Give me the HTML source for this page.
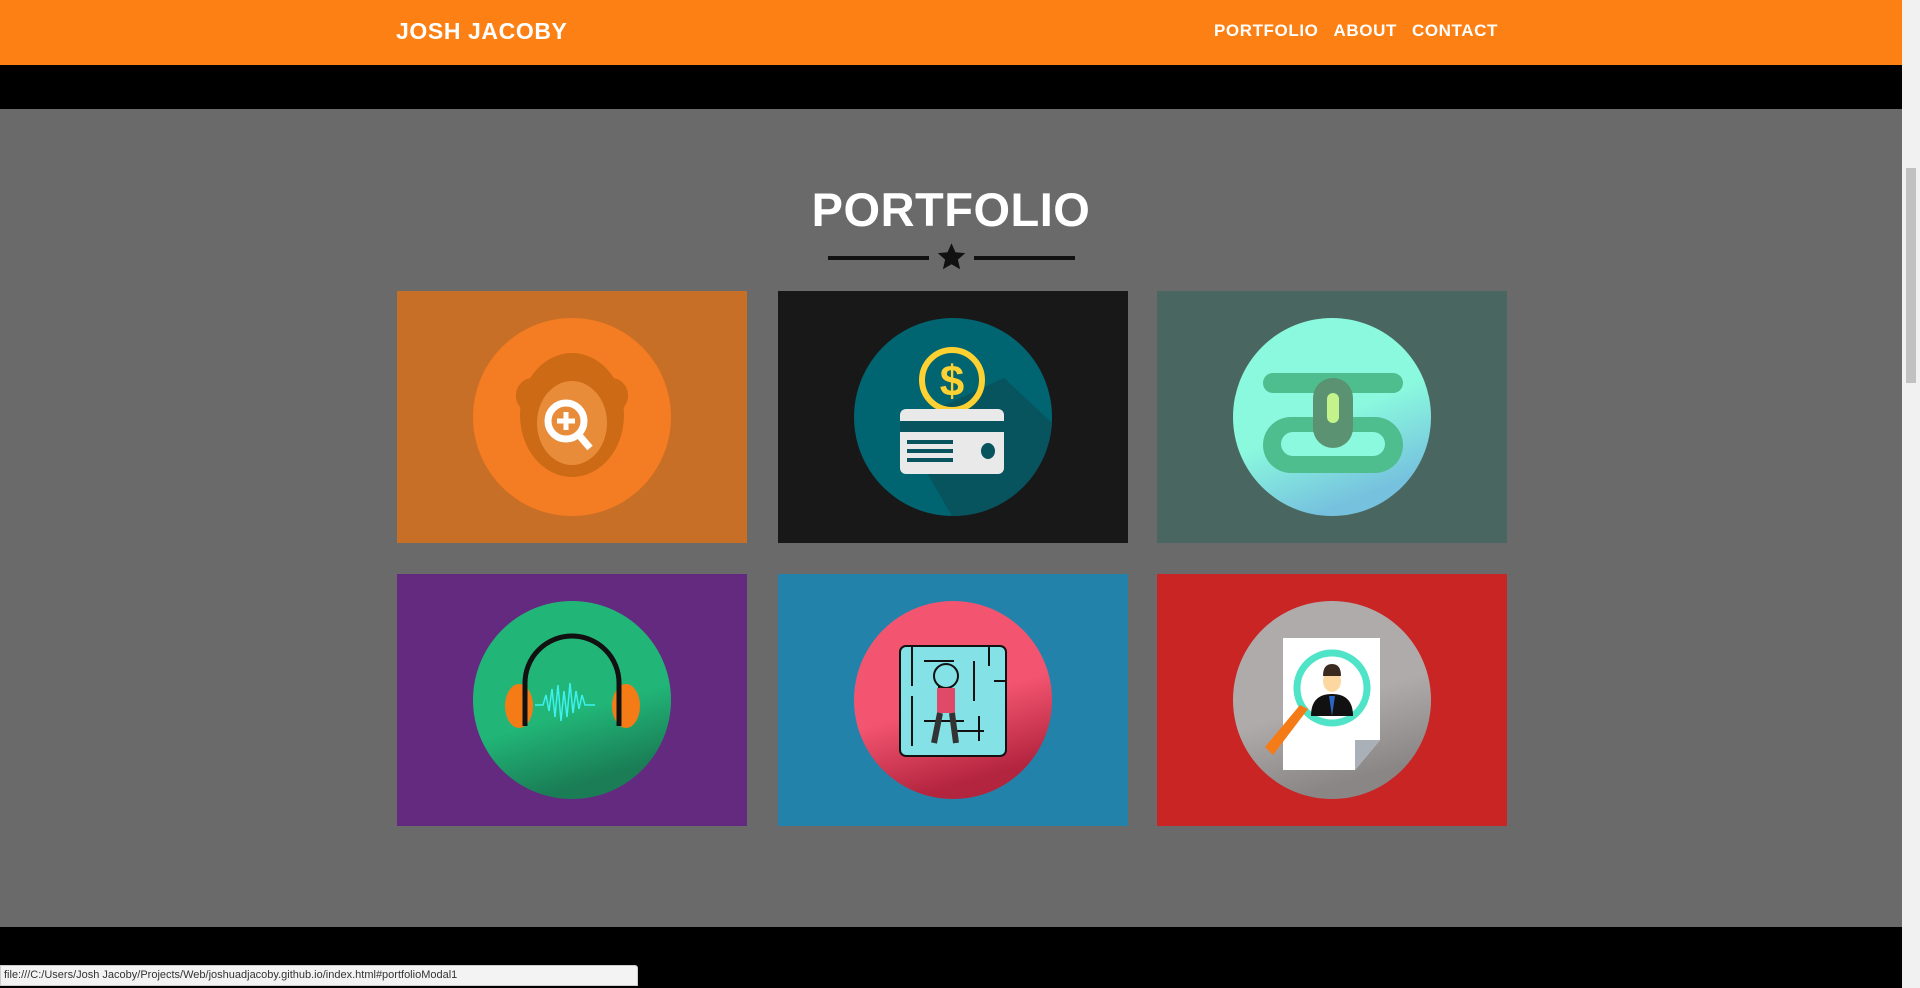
<!DOCTYPE html>
<html><head><meta charset="utf-8"><style>
*{margin:0;padding:0;box-sizing:border-box}
body{width:1920px;height:988px;overflow:hidden;background:#000;font-family:"Liberation Sans",sans-serif;position:relative}
.nav{position:absolute;left:0;top:0;width:1902px;height:65px;background:#fc8014}
.brand{position:absolute;left:396px;top:18px;color:#fff;font-weight:bold;font-size:23px;letter-spacing:0.6px}
.links{position:absolute;right:404px;top:21px;color:#fff;font-weight:bold;font-size:17px;letter-spacing:0.6px}
.links span{margin-left:15px}
.main{position:absolute;left:0;top:109px;width:1902px;height:818px;background:#6a6a6a}
h1{position:absolute;left:0;width:1902px;top:73px;text-align:center;color:#fff;font-size:47px;font-weight:bold;letter-spacing:0.5px}
.line{position:absolute;top:147px;height:4px;background:#111;width:101px}
.tile{position:absolute;width:350px;height:252px}
.tile svg{position:absolute;left:76px;top:27px}
.sb{position:absolute;right:0;top:0;width:18px;height:988px;background:#f1f1f1}
.sb div{position:absolute;left:4px;top:168px;width:10px;height:215px;background:#c1c1c1}
.status{position:absolute;left:0;top:965px;width:638px;height:21px;background:#f3f3f3;border:1px solid #ccc;font-size:11px;color:#333;padding:3px 3px;border-radius:0 3px 0 0}
</style></head><body>
<div class="nav"><div class="brand">JOSH JACOBY</div><div class="links"><span>PORTFOLIO</span><span>ABOUT</span><span>CONTACT</span></div></div>
<div class="main">
<h1>PORTFOLIO</h1>
<div class="line" style="left:828px"></div><div class="line" style="left:974px"></div>
<svg style="position:absolute;left:936px;top:133px" width="31" height="30" viewBox="0 0 24 24"><path d="M12 1l3.2 7.2 7.8.7-5.9 5.2 1.8 7.7L12 17.8 5.1 21.8l1.8-7.7L1 8.9l7.8-.7z" fill="#111"/></svg>
</div>
<div class="tile" style="left:397px;top:291px;background:#c86f27"><svg width="198" height="198" viewBox="0 0 198 198"><circle cx="99" cy="99" r="99" fill="#f47c22"/><ellipse cx="99" cy="97" rx="52" ry="62" fill="#cc6a16"/><rect x="43" y="60" width="112" height="35" rx="17" fill="#cc6a16"/><ellipse cx="99" cy="105" rx="35" ry="42" fill="#e98c3a"/><circle cx="93" cy="103" r="18" fill="none" stroke="#fff" stroke-width="7"/><path d="M93 94v18M84 103h18" stroke="#fff" stroke-width="5"/><path d="M105 116l12 14" stroke="#fff" stroke-width="7"/></svg></div>
<div class="tile" style="left:778px;top:291px;background:#181818"><svg width="198" height="198" viewBox="0 0 198 198"><circle cx="99" cy="99" r="99" fill="#006471"/><path d="M150 60l48 45a99 99 0 0 1-100 93l-52-90z" fill="#07535e"/><circle cx="98" cy="62" r="30" fill="none" stroke="#fdd131" stroke-width="6"/><text x="98" y="78" text-anchor="middle" font-size="44" font-weight="bold" fill="#fdd131" font-family="Liberation Sans">$</text><rect x="46" y="91" width="104" height="65" rx="6" fill="#e9e9e9"/><rect x="46" y="103" width="104" height="11" fill="#07535e"/><rect x="53" y="122" width="46" height="4" fill="#07535e"/><rect x="53" y="131" width="46" height="4" fill="#07535e"/><rect x="53" y="140" width="46" height="4" fill="#07535e"/><ellipse cx="134" cy="133" rx="7" ry="8" fill="#07535e"/></svg></div>
<div class="tile" style="left:1157px;top:291px;background:#496760"><svg width="198" height="198" viewBox="0 0 198 198"><defs><linearGradient id="g1" x1="0" y1="0" x2="0.4" y2="1"><stop offset=".6" stop-color="#8bf9de"/><stop offset="1" stop-color="#76c2de"/></linearGradient></defs><circle cx="99" cy="99" r="99" fill="url(#g1)"/><rect x="30" y="55" width="140" height="20" rx="10" fill="#4fbe8f"/><rect x="30" y="99" width="140" height="56" rx="28" fill="#4fbe8f"/><rect x="48" y="114" width="104" height="24" rx="12" fill="#8bf9de"/><rect x="80" y="60" width="40" height="70" rx="20" fill="#5a9272"/><rect x="94" y="75" width="12" height="30" rx="6" fill="#c3f38a"/></svg></div>
<div class="tile" style="left:397px;top:574px;background:#642a80"><svg width="198" height="198" viewBox="0 0 198 198"><defs><linearGradient id="g2" x1="0" y1="0" x2="0.3" y2="1"><stop offset=".65" stop-color="#21b678"/><stop offset="1" stop-color="#1a7d55"/></linearGradient></defs><circle cx="99" cy="99" r="99" fill="url(#g2)"/><ellipse cx="46" cy="105" rx="14" ry="22" fill="#f57b16"/><ellipse cx="153" cy="105" rx="14" ry="22" fill="#f57b16"/><path d="M52 125V82a47 47 0 0 1 94 0v43" fill="none" stroke="#111" stroke-width="5"/><path d="M62 104h8l3-10 3 16 3-22 3 28 3-32 3 36 3-30 3 26 3-34 3 30 3-22 3 18 3-14 3 10h10" fill="none" stroke="#3ef0f0" stroke-width="1.5"/></svg></div>
<div class="tile" style="left:778px;top:574px;background:#2382aa"><svg width="198" height="198" viewBox="0 0 198 198"><defs><linearGradient id="g3" x1="0" y1="0" x2="0.3" y2="1"><stop offset=".6" stop-color="#f35570"/><stop offset="1" stop-color="#b3243e"/></linearGradient></defs><circle cx="99" cy="99" r="99" fill="url(#g3)"/><rect x="46" y="45" width="106" height="110" rx="6" fill="#84e1e6" stroke="#111" stroke-width="2"/><path d="M58 45v40M58 95v50M70 60h30M120 60v40M135 45v20M140 80h12M70 120h40M125 115v25M85 80v30M100 130h30" stroke="#111" stroke-width="2"/><circle cx="92" cy="75" r="12" fill="#84e1e6" stroke="#111" stroke-width="2"/><rect x="83" y="87" width="18" height="25" fill="#e04a68"/><path d="M86 112l-6 30M98 112l4 30" stroke="#333" stroke-width="6"/></svg></div>
<div class="tile" style="left:1157px;top:574px;background:#c92525"><svg width="198" height="198" viewBox="0 0 198 198"><defs><linearGradient id="g4" x1="0" y1="0" x2="0.3" y2="1"><stop offset=".6" stop-color="#b0abab"/><stop offset="1" stop-color="#8a8686"/></linearGradient></defs><circle cx="99" cy="99" r="99" fill="url(#g4)"/><path d="M50 37h97v102l-25 30H50z" fill="#fff"/><path d="M147 139l-25 30v-30z" fill="#aab0b8"/><circle cx="99" cy="87" r="35" fill="#fff" stroke="#4fe3c8" stroke-width="7"/><path d="M78 115q0-22 21-22t21 22z" fill="#111"/><path d="M96 95h6l-3 20z" fill="#2b66c6"/><ellipse cx="99" cy="80" rx="9" ry="11" fill="#fcd7a0"/><path d="M90 75q0-12 9-12t9 12z" fill="#3a2a20"/><path d="M75 108l-35 46-8-8 35-42z" fill="#f57b16"/></svg></div>
<div class="sb"><div></div></div>
<div class="status">file:///C:/Users/Josh Jacoby/Projects/Web/joshuadjacoby.github.io/index.html#portfolioModal1</div>
</body></html>
